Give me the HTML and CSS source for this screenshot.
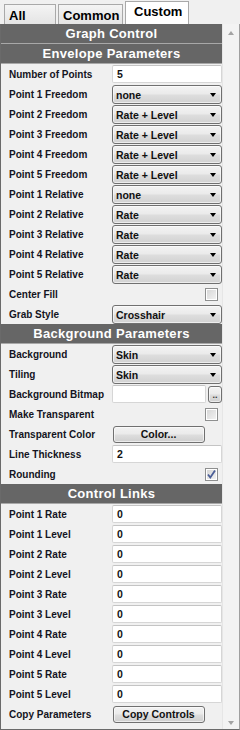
FILE: index.html
```html
<!DOCTYPE html>
<html lang="en">
<head>
    <meta charset="UTF-8">
    <meta name="viewport" content="width=device-width, initial-scale=1.0">
    <title>Graph Control</title>
    <link rel="stylesheet" href="styles.css">
</head>
<body>
    <div class="window">
        <div class="tab-row">
            <div class="tab tab-all">All</div>
            <div class="tab tab-common">Common</div>
            <div class="tab tab-custom active">Custom</div>
        </div>

        <div class="frame">
            <div class="panel">
                <div class="section">Graph Control</div>
                <div class="section">Envelope Parameters</div>

                <div class="row"><span class="label">Number of Points</span><div class="edit">5</div></div>
                <div class="row"><span class="label">Point 1 Freedom</span><div class="combo">none</div></div>
                <div class="row"><span class="label">Point 2 Freedom</span><div class="combo">Rate + Level</div></div>
                <div class="row"><span class="label">Point 3 Freedom</span><div class="combo">Rate + Level</div></div>
                <div class="row"><span class="label">Point 4 Freedom</span><div class="combo">Rate + Level</div></div>
                <div class="row"><span class="label">Point 5 Freedom</span><div class="combo">Rate + Level</div></div>
                <div class="row"><span class="label">Point 1 Relative</span><div class="combo">none</div></div>
                <div class="row"><span class="label">Point 2 Relative</span><div class="combo">Rate</div></div>
                <div class="row"><span class="label">Point 3 Relative</span><div class="combo">Rate</div></div>
                <div class="row"><span class="label">Point 4 Relative</span><div class="combo">Rate</div></div>
                <div class="row"><span class="label">Point 5 Relative</span><div class="combo">Rate</div></div>
                <div class="row"><span class="label">Center Fill</span><div class="check-cell"><span class="check"></span></div></div>
                <div class="row"><span class="label">Grab Style</span><div class="combo">Crosshair</div></div>

                <div class="section">Background Parameters</div>

                <div class="row"><span class="label">Background</span><div class="combo">Skin</div></div>
                <div class="row"><span class="label">Tiling</span><div class="combo">Skin</div></div>
                <div class="row">
                    <span class="label">Background Bitmap</span>
                    <div class="browse"><div class="edit"></div><div class="btn btn-dots">..</div></div>
                </div>
                <div class="row"><span class="label">Make Transparent</span><div class="check-cell"><span class="check"></span></div></div>
                <div class="row"><span class="label">Transparent Color</span><div class="btn-cell"><div class="btn">Color...</div></div></div>
                <div class="row"><span class="label">Line Thickness</span><div class="edit">2</div></div>
                <div class="row">
                    <span class="label">Rounding</span>
                    <div class="check-cell">
                        <span class="check">
                            <svg width="11" height="11" viewBox="0 0 11 11"><path d="M2 5.5 L4.3 8.5 L9 1.5" fill="none" stroke="#4b5e97" stroke-width="1.8"/></svg>
                        </span>
                    </div>
                </div>

                <div class="section">Control Links</div>

                <div class="row"><span class="label">Point 1 Rate</span><div class="edit">0</div></div>
                <div class="row"><span class="label">Point 1 Level</span><div class="edit">0</div></div>
                <div class="row"><span class="label">Point 2 Rate</span><div class="edit">0</div></div>
                <div class="row"><span class="label">Point 2 Level</span><div class="edit">0</div></div>
                <div class="row"><span class="label">Point 3 Rate</span><div class="edit">0</div></div>
                <div class="row"><span class="label">Point 3 Level</span><div class="edit">0</div></div>
                <div class="row"><span class="label">Point 4 Rate</span><div class="edit">0</div></div>
                <div class="row"><span class="label">Point 4 Level</span><div class="edit">0</div></div>
                <div class="row"><span class="label">Point 5 Rate</span><div class="edit">0</div></div>
                <div class="row"><span class="label">Point 5 Level</span><div class="edit">0</div></div>
                <div class="row"><span class="label">Copy Parameters</span><div class="btn-cell"><div class="btn">Copy Controls</div></div></div>
            </div>

            <div class="scrollbar">
                <span class="arrow up"></span>
                <span class="arrow down"></span>
            </div>
        </div>
    </div>
</body>
</html>
```

FILE: styles.css
```css
/* Fenetre */
body {
    margin: 0;
    padding: 0;
    background: #f0f0f0;
    font-family: "Liberation Sans", Arial, sans-serif;
    color: #111;
}

.window {
    width: 240px;
    height: 730px;
    display: flex;
    flex-direction: column;
    background: #f0f0f0;
    overflow: hidden;
}

/* Onglets */
.tab-row {
    height: 24px;
    display: flex;
    align-items: flex-end;
    padding-left: 4px;
    box-sizing: border-box;
    gap: 2px;
}

.tab {
    height: 20px;
    box-sizing: border-box;
    border: 1px solid #a9a9a9;
    border-bottom: none;
    background: linear-gradient(#f4f4f4, #e4e4e4);
    font-size: 13px;
    font-weight: bold;
    line-height: 21px;
    padding-left: 4px;
    color: #000;
}

.tab-all { width: 52px; }
.tab-common { width: 65px; }

.tab.active {
    height: 23px;
    width: 64px;
    background: #fff;
    padding-left: 8px;
    line-height: 20px;
}

/* Cadre */
.frame {
    flex: 1;
    display: flex;
    border-left: 1px solid #6a6a6a;
    border-bottom: 1px solid #6a6a6a;
    border-right: 1px solid #a0a0a0;
}

.panel {
    width: 221px;
    display: flex;
    flex-direction: column;
}

.section {
    height: 19px;
    border-bottom: 1px solid #a8a8a8;
    background: #666;
    color: #fff;
    font-size: 13px;
    font-weight: bold;
    letter-spacing: 0.3px;
    text-align: center;
    line-height: 19px;
}

.row {
    height: 20px;
    display: flex;
    align-items: center;
}

.label {
    width: 103px;
    padding-left: 8px;
    font-size: 10px;
    font-weight: bold;
    color: #141422;
    white-space: nowrap;
}

/* Controles */
.edit {
    width: 110px;
    height: 18px;
    box-sizing: border-box;
    border: 1px solid #d6d6d6;
    border-top-color: #c4c4c4;
    border-radius: 2px;
    background: #fff;
    font-size: 10.5px;
    font-weight: bold;
    line-height: 16px;
    padding-left: 4px;
}

.combo {
    position: relative;
    width: 110px;
    height: 19px;
    box-sizing: border-box;
    border: 1px solid #707070;
    border-radius: 3px;
    background: linear-gradient(#f3f3f3, #ebebeb 45%, #dddddd 55%, #d2d2d2);
    box-shadow: inset 0 0 0 1px rgba(255, 255, 255, 0.6);
    font-size: 10.5px;
    font-weight: bold;
    line-height: 18px;
    padding-left: 3px;
}

.combo::after {
    content: "";
    position: absolute;
    right: 5px;
    top: 7px;
    border-left: 3.5px solid transparent;
    border-right: 3.5px solid transparent;
    border-top: 4px solid #000;
}

.check-cell {
    width: 110px;
    display: flex;
    justify-content: flex-end;
    padding-right: 4px;
    box-sizing: border-box;
}

.check {
    width: 13px;
    height: 13px;
    box-sizing: border-box;
    border: 1px solid #8e8f8f;
    background: linear-gradient(135deg, #d4d4d4, #f4f4f4);
    box-shadow: inset 0 0 0 1px #fff;
    display: flex;
    align-items: center;
    justify-content: center;
}

.btn-cell {
    width: 110px;
    padding-left: 1px;
}

.btn {
    width: 92px;
    height: 17px;
    box-sizing: border-box;
    border: 1px solid #707070;
    border-radius: 3px;
    background: linear-gradient(#f2f2f2, #ebebeb 45%, #dddddd 55%, #cfcfcf);
    box-shadow: inset 0 0 0 1px rgba(255, 255, 255, 0.6);
    font-size: 10.5px;
    font-weight: bold;
    text-align: center;
    line-height: 15px;
}

.browse {
    width: 110px;
    display: flex;
    gap: 2px;
}

.browse .edit {
    width: 94px;
}

.btn-dots {
    width: 14px;
    height: 17px;
    margin-top: 1px;
    line-height: 17px;
    font-size: 9px;
    color: #333;
}

/* Barre de defilement */
.scrollbar {
    flex: 1;
    position: relative;
    background: #f3f3f3;
    border-left: 1px solid #e6e6e6;
}

.arrow {
    position: absolute;
    left: 5px;
    border-left: 3.5px solid transparent;
    border-right: 3.5px solid transparent;
}

.arrow.up {
    top: 7px;
    border-bottom: 4px solid #a3a3a3;
}

.arrow.down {
    bottom: 4px;
    border-top: 4px solid #a3a3a3;
}
```
